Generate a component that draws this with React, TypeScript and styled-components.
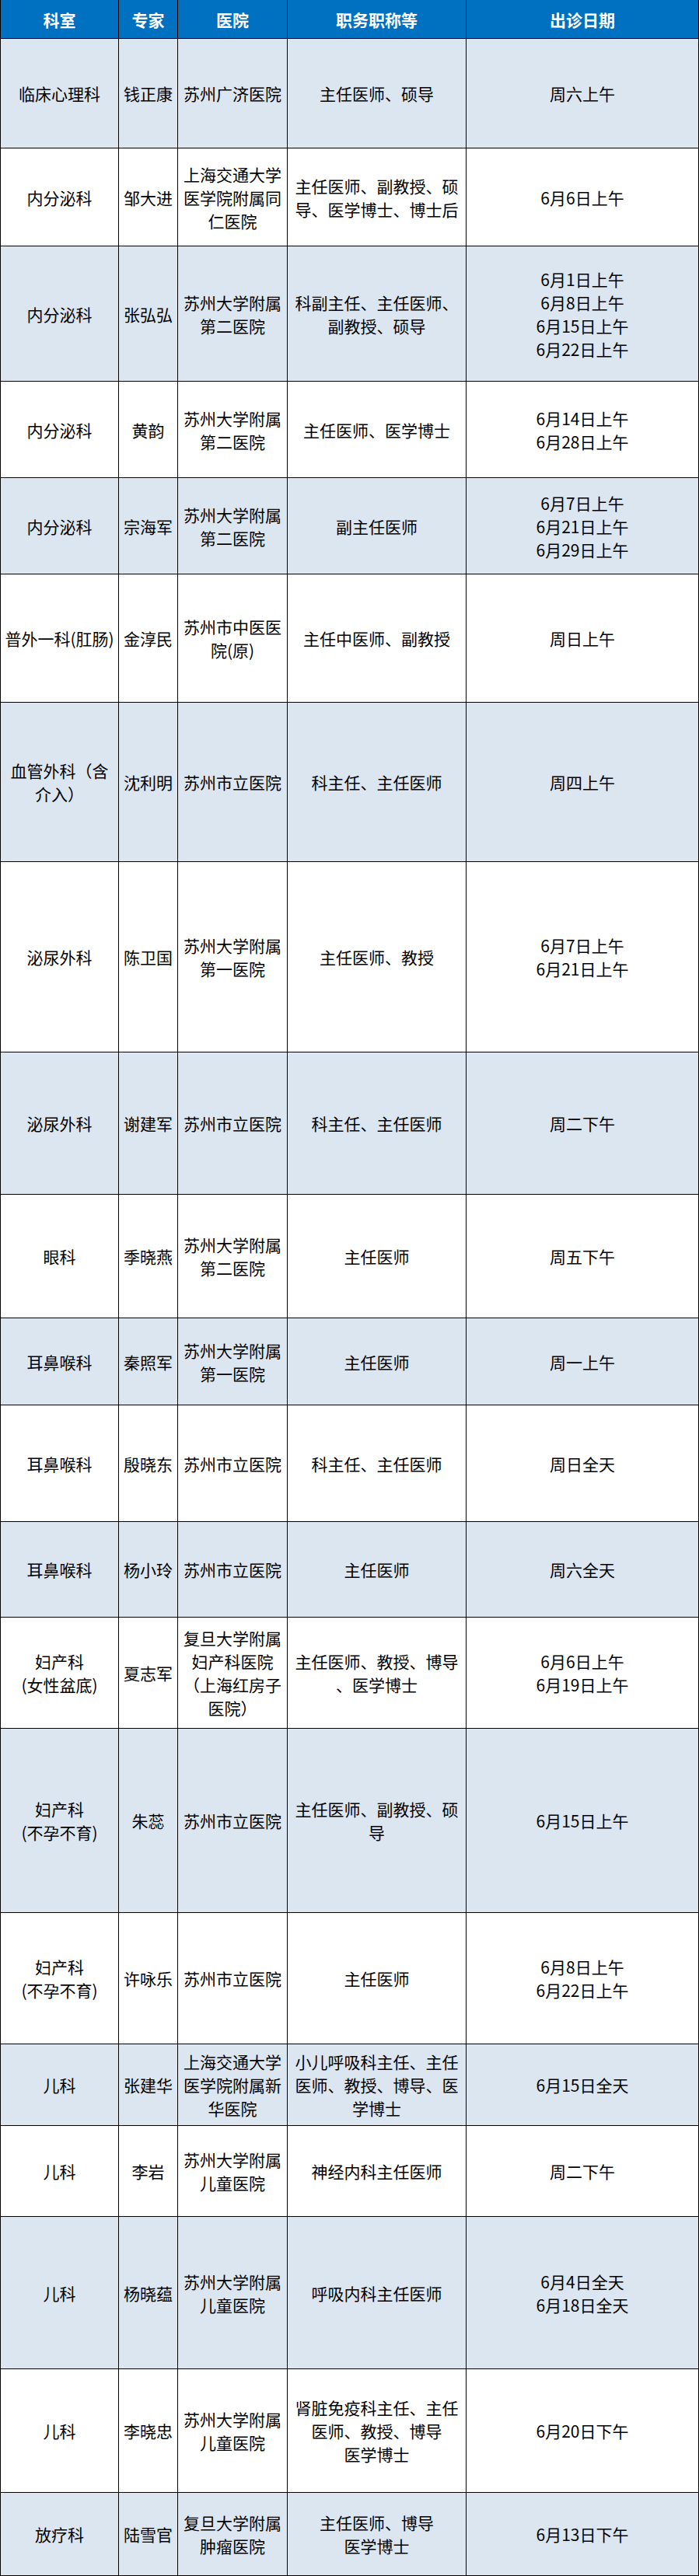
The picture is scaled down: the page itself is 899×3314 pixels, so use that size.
import React from 'react'
import styled, { createGlobalStyle } from 'styled-components'

const GlobalStyle = createGlobalStyle`
  html, body {
    margin: 0;
    padding: 0;
    background: #ffffff;
  }
  body {
    font-family: 'Noto Sans CJK SC', 'Noto Sans', sans-serif;
  }
`

type Visit = {
  dept: string[]
  doctor: string
  hospital: string[]
  title: string[]
  dates: string[]
  height: number
}

const columns = [
  { label: '科室', width: 152 },
  { label: '专家', width: 76 },
  { label: '医院', width: 141 },
  { label: '职务职称等', width: 230 },
  { label: '出诊日期', width: 299 }
]

const SZ2 = ['苏州大学附属', '第二医院']
const SZ1 = ['苏州大学附属', '第一医院']
const SZKids = ['苏州大学附属', '儿童医院']
const SZCity = ['苏州市立医院']

const visits: Visit[] = [
  { dept: ['临床心理科'], doctor: '钱正康', hospital: ['苏州广济医院'], title: ['主任医师、硕导'], dates: ['周六上午'], height: 141 },
  {
    dept: ['内分泌科'],
    doctor: '邹大进',
    hospital: ['上海交通大学', '医学院附属同', '仁医院'],
    title: ['主任医师、副教授、硕', '导、医学博士、博士后'],
    dates: ['6月6日上午'],
    height: 126
  },
  {
    dept: ['内分泌科'],
    doctor: '张弘弘',
    hospital: SZ2,
    title: ['科副主任、主任医师、', '副教授、硕导'],
    dates: ['6月1日上午', '6月8日上午', '6月15日上午', '6月22日上午'],
    height: 174
  },
  { dept: ['内分泌科'], doctor: '黄韵', hospital: SZ2, title: ['主任医师、医学博士'], dates: ['6月14日上午', '6月28日上午'], height: 124 },
  { dept: ['内分泌科'], doctor: '宗海军', hospital: SZ2, title: ['副主任医师'], dates: ['6月7日上午', '6月21日上午', '6月29日上午'], height: 124 },
  { dept: ['普外一科(肛肠)'], doctor: '金淳民', hospital: ['苏州市中医医', '院(原)'], title: ['主任中医师、副教授'], dates: ['周日上午'], height: 165 },
  { dept: ['血管外科（含', '介入）'], doctor: '沈利明', hospital: SZCity, title: ['科主任、主任医师'], dates: ['周四上午'], height: 205 },
  { dept: ['泌尿外科'], doctor: '陈卫国', hospital: SZ1, title: ['主任医师、教授'], dates: ['6月7日上午', '6月21日上午'], height: 245 },
  { dept: ['泌尿外科'], doctor: '谢建军', hospital: SZCity, title: ['科主任、主任医师'], dates: ['周二下午'], height: 183 },
  { dept: ['眼科'], doctor: '季晓燕', hospital: SZ2, title: ['主任医师'], dates: ['周五下午'], height: 159 },
  { dept: ['耳鼻喉科'], doctor: '秦照军', hospital: SZ1, title: ['主任医师'], dates: ['周一上午'], height: 112 },
  { dept: ['耳鼻喉科'], doctor: '殷晓东', hospital: SZCity, title: ['科主任、主任医师'], dates: ['周日全天'], height: 150 },
  { dept: ['耳鼻喉科'], doctor: '杨小玲', hospital: SZCity, title: ['主任医师'], dates: ['周六全天'], height: 123 },
  {
    dept: ['妇产科', '(女性盆底)'],
    doctor: '夏志军',
    hospital: ['复旦大学附属', '妇产科医院', '（上海红房子', '医院）'],
    title: ['主任医师、教授、博导', '、医学博士'],
    dates: ['6月6日上午', '6月19日上午'],
    height: 143
  },
  {
    dept: ['妇产科', '(不孕不育)'],
    doctor: '朱蕊',
    hospital: SZCity,
    title: ['主任医师、副教授、硕', '导'],
    dates: ['6月15日上午'],
    height: 237
  },
  { dept: ['妇产科', '(不孕不育)'], doctor: '许咏乐', hospital: SZCity, title: ['主任医师'], dates: ['6月8日上午', '6月22日上午'], height: 169 },
  {
    dept: ['儿科'],
    doctor: '张建华',
    hospital: ['上海交通大学', '医学院附属新', '华医院'],
    title: ['小儿呼吸科主任、主任', '医师、教授、博导、医', '学博士'],
    dates: ['6月15日全天'],
    height: 105
  },
  { dept: ['儿科'], doctor: '李岩', hospital: SZKids, title: ['神经内科主任医师'], dates: ['周二下午'], height: 117 },
  { dept: ['儿科'], doctor: '杨晓蕴', hospital: SZKids, title: ['呼吸内科主任医师'], dates: ['6月4日全天', '6月18日全天'], height: 196 },
  {
    dept: ['儿科'],
    doctor: '李晓忠',
    hospital: SZKids,
    title: ['肾脏免疫科主任、主任', '医师、教授、博导', '医学博士'],
    dates: ['6月20日下午'],
    height: 159
  },
  {
    dept: ['放疗科'],
    doctor: '陆雪官',
    hospital: ['复旦大学附属', '肿瘤医院'],
    title: ['主任医师、博导', '医学博士'],
    dates: ['6月13日下午'],
    height: 107
  }
]

const Schedule = styled.table`
  width: 899px;
  table-layout: fixed;
  border-collapse: separate;
  border-spacing: 0;
  border-left: 1px solid #000000;
  font-size: 21px;
  line-height: 30px;
  color: #000000;
`

const HeadRow = styled.tr`
  height: 50px;
  background: #0070c0;
`

const HeadCell = styled.th`
  padding: 0;
  border-right: 1px solid #000000;
  border-bottom: 1px solid #000000;
  color: #ffffff;
  font-weight: 700;
  text-align: center;
  vertical-align: middle;
`

const Row = styled.tr<{ $h: number }>`
  height: ${(p) => p.$h}px;
  background: #ffffff;

  &:nth-child(odd) {
    background: #dce6f1;
  }
`

const Cell = styled.td`
  padding: 0 2px;
  border-right: 1px solid #000000;
  border-bottom: 1px solid #000000;
  text-align: center;
  vertical-align: middle;
  white-space: nowrap;
`

const Lines = ({ items }: { items: string[] }) => (
  <>
    {items.map((line, i) => (
      <React.Fragment key={i}>
        {i > 0 && <br />}
        {line}
      </React.Fragment>
    ))}
  </>
)

export default function App() {
  return (
    <>
      <GlobalStyle />
      <Schedule>
        <colgroup>
          {columns.map((c) => (
            <col key={c.label} style={{ width: c.width }} />
          ))}
        </colgroup>
        <thead>
          <HeadRow>
            {columns.map((c) => (
              <HeadCell key={c.label}>{c.label}</HeadCell>
            ))}
          </HeadRow>
        </thead>
        <tbody>
          {visits.map((v, i) => (
            <Row key={i} $h={v.height}>
              <Cell>
                <Lines items={v.dept} />
              </Cell>
              <Cell>{v.doctor}</Cell>
              <Cell>
                <Lines items={v.hospital} />
              </Cell>
              <Cell>
                <Lines items={v.title} />
              </Cell>
              <Cell>
                <Lines items={v.dates} />
              </Cell>
            </Row>
          ))}
        </tbody>
      </Schedule>
    </>
  )
}
